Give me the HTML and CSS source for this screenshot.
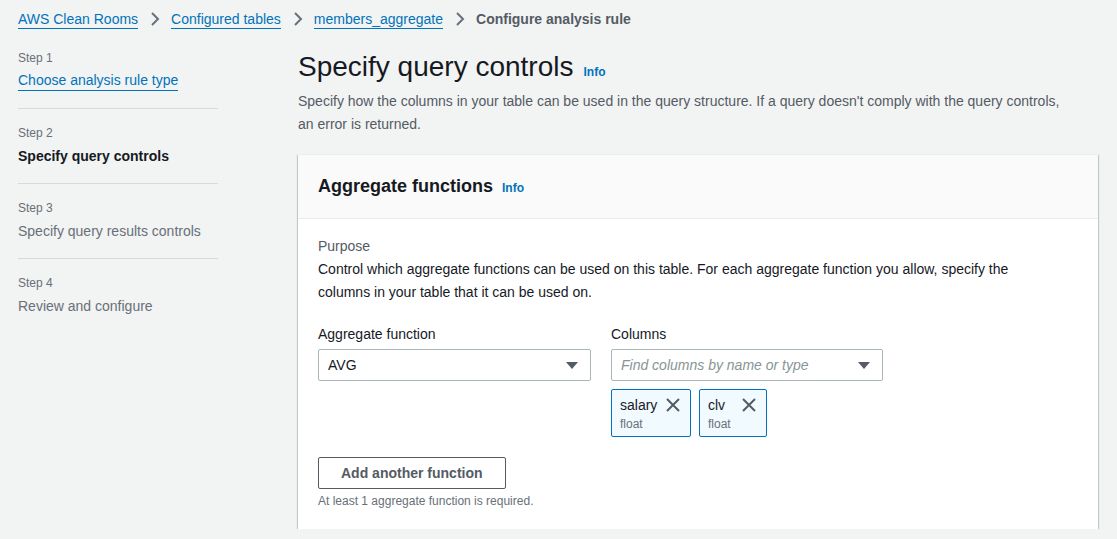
FILE: index.html
```html
<!DOCTYPE html>
<html>
<head>
<meta charset="utf-8">
<link rel="stylesheet" href="styles.css">
</head>
<body>
<nav class="crumbs">
  <a class="crumb-link" href="#">AWS Clean Rooms</a>
  <svg class="chev" viewBox="0 0 16 16"><polyline points="5,2 11,8 5,14"/></svg>
  <a class="crumb-link" href="#">Configured tables</a>
  <svg class="chev" viewBox="0 0 16 16"><polyline points="5,2 11,8 5,14"/></svg>
  <a class="crumb-link" href="#">members_aggregate</a>
  <svg class="chev" viewBox="0 0 16 16"><polyline points="5,2 11,8 5,14"/></svg>
  <span class="crumb-current">Configure analysis rule</span>
</nav>
<div class="layout">
  <ul class="steps">
    <li class="step">
      <div class="step-num">Step 1</div>
      <a class="step-title link" href="#">Choose analysis rule type</a>
    </li>
    <li class="step">
      <div class="step-num">Step 2</div>
      <div class="step-title active">Specify query controls</div>
    </li>
    <li class="step">
      <div class="step-num">Step 3</div>
      <div class="step-title muted">Specify query results controls</div>
    </li>
    <li class="step">
      <div class="step-num">Step 4</div>
      <div class="step-title muted">Review and configure</div>
    </li>
  </ul>
  <main class="main">
    <h1 class="page-title"><span>Specify query controls</span><a class="info" href="#">Info</a></h1>
    <p class="page-desc">Specify how the columns in your table can be used in the query structure. If a query doesn't comply with the query controls, an error is returned.</p>
    <section class="panel">
      <header class="panel-head">
        <h2 class="panel-title"><span>Aggregate functions</span><a class="info" href="#">Info</a></h2>
      </header>
      <div class="panel-body">
        <div class="label-muted">Purpose</div>
        <p class="purpose">Control which aggregate functions can be used on this table. For each aggregate function you allow, specify the columns in your table that it can be used on.</p>
        <div class="fields">
          <div class="field">
            <div class="field-label">Aggregate function</div>
            <div class="select">
              <span class="select-value">AVG</span>
              <svg class="caret" viewBox="0 0 16 16"><polygon points="2,5 14,5 8,12"/></svg>
            </div>
          </div>
          <div class="field">
            <div class="field-label">Columns</div>
            <div class="select">
              <span class="select-placeholder">Find columns by name or type</span>
              <svg class="caret" viewBox="0 0 16 16"><polygon points="2,5 14,5 8,12"/></svg>
            </div>
            <div class="tokens">
              <div class="token">
                <div class="token-text">
                  <div class="token-name">salary</div>
                  <div class="token-type">float</div>
                </div>
                <svg class="token-x" viewBox="0 0 16 16"><path d="M2 2 L14 14 M14 2 L2 14"/></svg>
              </div>
              <div class="token">
                <div class="token-text short">
                  <div class="token-name">clv</div>
                  <div class="token-type">float</div>
                </div>
                <svg class="token-x" viewBox="0 0 16 16"><path d="M2 2 L14 14 M14 2 L2 14"/></svg>
              </div>
            </div>
          </div>
        </div>
        <button class="btn">Add another function</button>
        <div class="hint">At least 1 aggregate function is required.</div>
      </div>
    </section>
  </main>
</div>
</body>
</html>
```
FILE: styles.css
```css
* { box-sizing: border-box; }
body {
  margin: 0;
  background: #f2f3f3;
  font-family: "Liberation Sans", Arial, sans-serif;
  font-size: 14px;
  color: #16191f;
}
a { color: #0073bb; }
.crumbs {
  display: flex;
  align-items: center;
  padding: 9px 18px;
  line-height: 20px;
  height: 38px;
}
.crumb-link {
  text-decoration: none;
  border-bottom: 1px solid #0073bb;
  line-height: 18px;
}
.chev {
  width: 16px;
  height: 16px;
  margin: 0 8px 0 9px;
  fill: none;
  stroke: #687078;
  stroke-width: 2;
}
.crumb-current {
  font-weight: bold;
  color: #545b64;
}
.layout {
  display: flex;
  gap: 80px;
  padding: 12px 19px 0 18px;
}
.steps {
  list-style: none;
  margin: 0;
  padding: 0;
  width: 200px;
  flex: none;
}
.step {
  padding: 16px 0;
  border-top: 1px solid #d5dbdb;
}
.step:first-child {
  border-top: none;
  padding-top: 0;
}
.step-num {
  font-size: 12px;
  line-height: 16px;
  color: #687078;
}
.step-title {
  display: inline-block;
  margin-top: 4px;
  line-height: 22px;
}
.step-title.link {
  text-decoration: none;
  line-height: 20px;
  border-bottom: 1px solid #0073bb;
  margin-bottom: 1px;
}
.step-title.active { font-weight: bold; color: #16191f; }
.step-title.muted { color: #687078; }
.main { flex: 1; min-width: 0; }
.page-title {
  margin: 0;
  display: flex;
  align-items: baseline;
  gap: 10px;
  font-size: 28px;
  font-weight: normal;
  line-height: 34px;
  height: 34px;
  color: #16191f;
}
.info {
  font-size: 12px;
  font-weight: bold;
  line-height: 1;
  text-decoration: none;
}
.page-desc {
  margin: 6px 0 0;
  max-width: 770px;
  line-height: 23px;
  color: #545b64;
}
.panel {
  margin-top: 18px;
  background: #fff;
  border-top: 1px solid #eaeded;
  box-shadow: 0 1px 1px 0 rgba(0,28,36,.3), 1px 1px 1px 0 rgba(0,28,36,.15), -1px 1px 1px 0 rgba(0,28,36,.15);
}
.panel-head {
  background: #fafafa;
  border-bottom: 1px solid #eaeded;
  padding: 19px 20px 20px;
  height: 64px;
}
.panel-title {
  margin: 0;
  display: flex;
  align-items: baseline;
  gap: 9px;
  font-size: 18px;
  line-height: 24px;
  height: 24px;
  font-weight: bold;
}
.panel-body {
  padding: 16px 20px 20px;
}
.label-muted {
  line-height: 22px;
  color: #545b64;
}
.purpose {
  margin: 1px 0 0;
  max-width: 720px;
  line-height: 23px;
}
.fields {
  display: grid;
  grid-template-columns: 273px 272px;
  gap: 20px;
  margin-top: 19px;
}
.field-label {
  line-height: 22px;
  margin-bottom: 4px;
}
.select {
  height: 32px;
  border: 1px solid #aab7b8;
  border-radius: 2px;
  display: flex;
  align-items: center;
  justify-content: space-between;
  padding: 0 10px 0 9px;
  background: #fff;
}
.select-placeholder {
  font-style: italic;
  color: #879596;
}
.caret {
  width: 16px;
  height: 16px;
  fill: #545b64;
}
.tokens {
  display: flex;
  gap: 8px;
  margin-top: 8px;
}
.token {
  display: flex;
  align-items: flex-start;
  gap: 6px;
  border: 1px solid #0073bb;
  border-radius: 2px;
  background: #f1faff;
  padding: 4px 9px 5px 8px;
  height: 48px;
}
.token-text { min-width: 39px; }
.token-text.short { min-width: 27px; }
.token-name { line-height: 22px; }
.token-type {
  font-size: 12px;
  line-height: 16px;
  color: #687078;
}
.token-x {
  width: 16px;
  height: 16px;
  margin-top: 3px;
  stroke: #545b64;
  stroke-width: 2;
  fill: none;
}
.btn {
  margin-top: 20px;
  display: block;
  font-family: inherit;
  font-size: 14px;
  font-weight: bold;
  color: #545b64;
  background: #fff;
  border: 1px solid #545b64;
  border-radius: 2px;
  padding: 0 22px;
  height: 32px;
  line-height: 30px;
}
.hint {
  margin-top: 4px;
  font-size: 12px;
  line-height: 16px;
  color: #687078;
}
```
